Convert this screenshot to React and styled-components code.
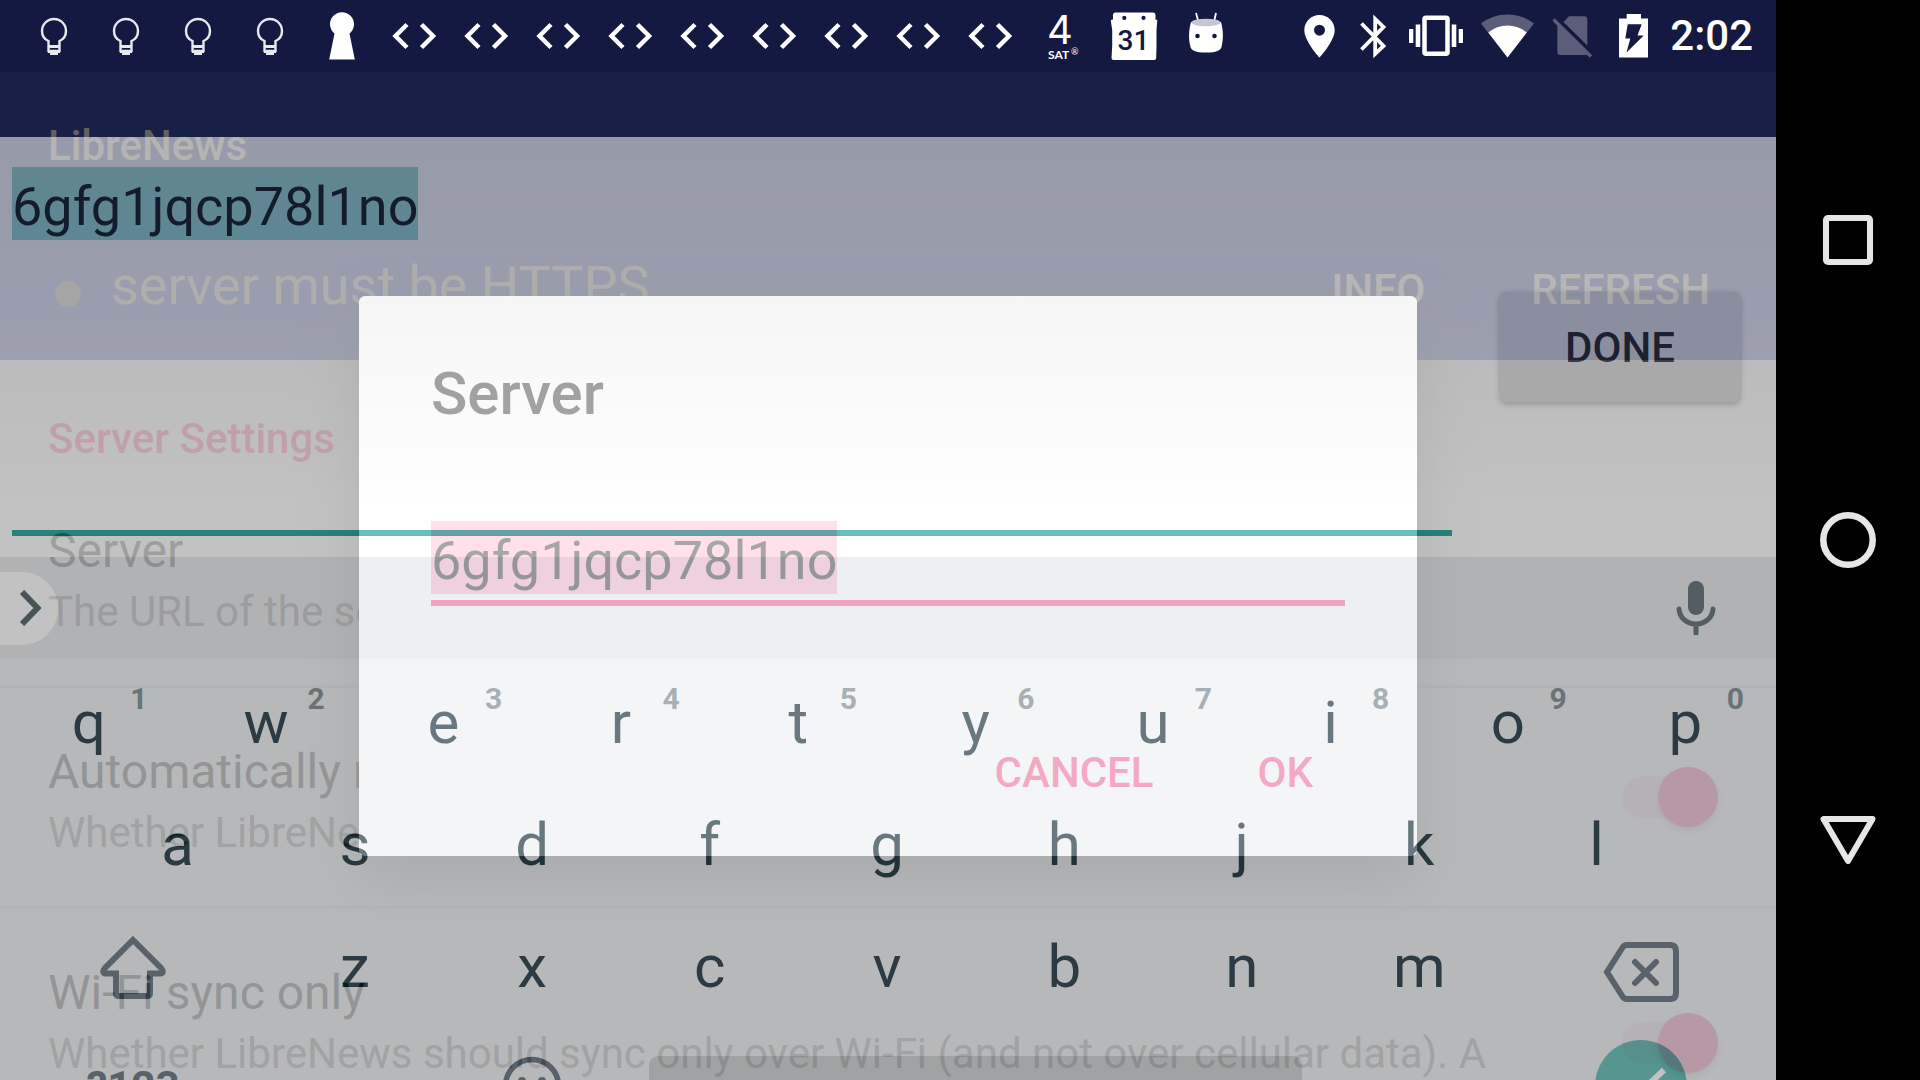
import React from "react";
import styled, { createGlobalStyle } from "styled-components";

const GlobalStyle = createGlobalStyle`
  * { box-sizing: border-box; }
  body { margin: 0; overflow: hidden; background: #000; font-family: Roboto, "Noto Sans", sans-serif; }
  button, input { font-family: inherit; margin: 0; }
  button { border: 0; padding: 0; background: none; cursor: pointer; }
  h1, h2, p { margin: 0; }
`;

const Device = styled.div`
  display: flex;
  height: 100vh;
`;

const Screen = styled.main`
  flex: 1;
  min-width: 0;
  display: flex;
  flex-direction: column;
`;

/* ---------- status bar ---------- */

const StatusBar = styled.header`
  height: 72px;
  flex: none;
  display: flex;
  justify-content: space-between;
  background: #131940;
  padding: 0 23px 0 18px;
`;

const StatusGroup = styled.div`
  display: flex;
  align-items: center;
  gap: ${(p) => p.$gap || 0}px;
`;

const Clock = styled.time`
  color: #fff;
  font-size: 42px;
  font-weight: 500;
  line-height: 72px;
`;

/* ---------- stacked windows ---------- */

const Stage = styled.div`
  flex: 1;
  min-height: 0;
  display: grid;
  grid-template: minmax(0, 1fr) / minmax(0, 1fr);
  overflow: hidden;
`;

const Layer = styled.div`
  grid-area: 1 / 1;
  min-width: 0;
  min-height: 0;
  overflow: hidden;
`;

/* ---------- settings page ---------- */

const SettingsPage = styled(Layer)`
  background: #fff;
`;

const AppBar = styled.div`
  display: flex;
  flex-direction: column;
  gap: 77px;
  padding: 47px 66px 38px 48px;
  background: #3f51b5;
  color: #f4f2ee;
`;

const AppTitle = styled.h1`
  font-size: 42px;
  line-height: 54px;
  font-weight: 500;
`;

const NoticeRow = styled.div`
  display: flex;
  align-items: flex-end;
  gap: 106px;
`;

const Notice = styled.p`
  flex: 1;
  display: flex;
  align-items: center;
  gap: 30px;
  padding-left: 7px;
  font-size: 54px;
  line-height: 72px;
  color: #bcbbba;
`;

const Dot = styled.span`
  width: 26px;
  height: 26px;
  margin-top: 16px;
  border-radius: 50%;
  background: #85837f;
`;

const BarAction = styled.button`
  color: inherit;
  font-size: 42px;
  line-height: 64px;
  font-weight: 500;
`;

const SectionTitle = styled.h2`
  padding: 52px 48px 1px;
  font-size: 42px;
  line-height: 54px;
  font-weight: 500;
  color: #ff4081;
`;

const Preference = styled.label`
  display: flex;
  align-items: center;
  padding: 0 58px 0 48px;
  min-height: ${(p) => (p.$tall ? 271 : 221)}px;
  border-bottom: 3px solid #e0e0e0;
`;

const PrefText = styled.div`
  flex: 1;
  display: flex;
  flex-direction: column;
  min-height: ${(p) => (p.$tall ? 172 : 122)}px;
`;

const PrefTitle = styled.span`
  font-size: 48px;
  line-height: 72px;
  color: #212121;
`;

const PrefSummary = styled.span`
  font-size: 42px;
  line-height: 50px;
  color: #757575;
`;

const Switch = styled.input`
  appearance: none;
  margin: 0;
  width: 96px;
  height: 60px;
  display: grid;
  align-items: center;
  &::before, &::after { content: ""; grid-area: 1 / 1; }
  &::before {
    width: 88px;
    height: 42px;
    border-radius: 21px;
    background: #ffd5e2;
  }
  &::after {
    width: 60px;
    height: 60px;
    border-radius: 50%;
    justify-self: end;
    background: #ff4081;
    box-shadow: 0 4px 6px rgba(0, 0, 0, 0.25);
  }
`;

/* ---------- dialog ---------- */

const Scrim = styled(Layer)`
  display: flex;
  align-items: center;
  justify-content: center;
  background: rgba(0, 0, 0, 0.6);
`;

const DialogBox = styled.section`
  width: 100%;
  max-width: 1058px;
  padding: 62px 72px 56px;
  border-radius: 6px;
  background: #fff;
  box-shadow: 0 24px 60px rgba(0, 0, 0, 0.35);
`;

const DialogTitle = styled.h2`
  font-size: 60px;
  line-height: 72px;
  font-weight: 500;
  color: #212121;
`;

const DialogField = styled.div`
  margin-top: 91px;
  padding-bottom: 6px;
  display: flex;
  border-bottom: 6px solid #ff4081;
`;

const SelectedInput = styled.input`
  field-sizing: content;
  border: 0;
  outline: 0;
  padding: 6px 0 0;
  height: 73px;
  font-size: 54px;
  line-height: 67px;
  color: ${(p) => p.$color};
  background: ${(p) => p.$mark};
`;

const DialogActions = styled.div`
  display: flex;
  justify-content: flex-end;
  gap: 104px;
  margin-top: 140px;
  padding-right: 32px;
`;

const DialogAction = styled.button`
  font-size: 42px;
  line-height: 54px;
  font-weight: 500;
  color: #ff4081;
`;

/* ---------- full-screen editor and keyboard ---------- */

const InputMethod = styled(Layer)`
  padding-top: 65px;
  opacity: 0.6;
`;

const Editor = styled.div`
  height: 420px;
  display: flex;
  align-items: center;
  gap: 48px;
  padding: 0 36px 0 12px;
  background: linear-gradient(#ececea, #f1f1f1 40%, #fff 88%);
`;

const EditorField = styled.div`
  flex: 1;
  align-self: stretch;
  display: flex;
  align-items: flex-start;
  margin-bottom: 21px;
  padding-top: 30px;
  border-bottom: 6px solid #009688;
`;

const DoneButton = styled.button`
  width: 240px;
  height: 110px;
  border-radius: 6px;
  background: #d6d7d7;
  color: rgba(0, 0, 0, 0.87);
  font-size: 42px;
  font-weight: 500;
  box-shadow: 0 2px 6px rgba(0, 0, 0, 0.3);
`;

const Keyboard = styled.div`
  background: #eceff1;
  color: #06202c;
`;

const Strip = styled.div`
  height: 102px;
  margin-bottom: 2px;
  display: flex;
  align-items: center;
  justify-content: space-between;
  padding-right: 60px;
  background: #e3e5e8;
`;

const Expand = styled.button`
  width: 58px;
  height: 73px;
  padding-left: 4px;
  border-radius: 0 36px 36px 0;
  background: #fff;
  display: grid;
  place-items: center;
`;

const KeyRow = styled.div`
  display: flex;
  height: 122px;
  margin-right: 2px;
  padding: 0 ${(p) => p.$inset || "0"};
`;

const BottomRow = styled.div`
  display: grid;
  grid-template-columns: 1.5fr 1fr 1fr 4fr 1fr 1.5fr;
  align-items: center;
  height: 118px;
  margin-right: 2px;
`;

const Key = styled.button`
  flex: ${(p) => p.$span || 1} 1 0;
  min-width: 0;
  position: relative;
  display: flex;
  align-items: center;
  justify-content: center;
  grid-column: ${(p) => p.$column || "auto"};
  color: ${(p) => (p.$muted ? "#51606d" : "inherit")};
  font-size: ${(p) => (p.$muted ? 42 : 60)}px;
  font-weight: ${(p) => (p.$muted ? 700 : 400)};
`;

const Hint = styled.span`
  position: absolute;
  top: 20px;
  right: 30px;
  font-size: 30px;
  line-height: 35px;
  font-weight: 700;
  color: #6c7c84;
`;

const SpaceKey = styled.button`
  grid-column: 4;
  height: 60px;
  margin: 0 28px;
  border-radius: 9px;
  background: #c7cdcd;
`;

const EnterKey = styled.button`
  grid-column: 6;
  justify-self: center;
  width: 92px;
  height: 92px;
  border-radius: 50%;
  background: #4db6ac;
  display: grid;
  place-items: center;
`;

/* ---------- navigation bar ---------- */

const NavBar = styled.nav`
  width: 144px;
  flex: none;
  display: flex;
  flex-direction: column;
  justify-content: center;
  background: #000;
`;

const NavButton = styled.button`
  height: 300px;
  display: grid;
  place-items: center;
`;

/* ---------- icons ---------- */

const Glyph = ({ w = 72, h = 72, children }) => (
  <svg width={w} height={h} viewBox={`0 0 ${w} ${h}`} fill="none" aria-hidden="true">
    {children}
  </svg>
);

const Bulb = () => (
  <Glyph>
    <path d="M30.5 51V41C27 39.5 24 36 24 31a12 12 0 0 1 24 0c0 5-3 8.500-6.500 10V51Z" stroke="#e6eaec" strokeWidth="2.400" />
    <path d="M30 46.500h12M30 51.500h12" stroke="#e6eaec" strokeWidth="2.800" />
    <path d="M32 51h8v4h-8z" fill="#e6eaec" />
  </Glyph>
);

const Keyhole = () => (
  <Glyph>
    <path d="M28.500 33.500a12 12 0 1 1 15 0L48.800 59.500H23.200Z" fill="#fff" />
  </Glyph>
);

const Code = () => (
  <Glyph>
    <path d="M29 24.500 17.500 36 29 47.500M43.500 24.500 55 36 43.500 47.500" stroke="#fff" strokeWidth="4.500" />
  </Glyph>
);

const SatDay = () => (
  <Glyph>
    <text x="21" y="44" fontFamily="Inter, sans-serif" fontSize="40" fill="#fff">4</text>
    <text x="22" y="59" fontFamily="Lato, sans-serif" fontSize="12" fontWeight="700" fill="#fff">SAT</text>
    <text x="45" y="55" fontFamily="Lato, sans-serif" fontSize="9" fill="#fff">®</text>
  </Glyph>
);

const Calendar = () => (
  <Glyph>
    <path
      fillRule="evenodd"
      fill="#fff"
      d="M17.500 12.500h38q2 0 2 2.500v4.500l1.800.5-.8 10v16l-.3 12q0 2-2 2H15.500q-2 0-2-2l.7-12V30l-1.500-10 2.300-.5V15q0-2.500 2.500-2.500ZM26.300 15.800a2.100 2.100 0 1 0 0 4.200 2.100 2.100 0 0 0 0-4.200Zm19.200 0a2.100 2.100 0 1 0 0 4.200 2.100 2.100 0 0 0 0-4.200Z"
    />
    <text x="35.500" y="50" textAnchor="middle" fontSize="28" fontWeight="500" fill="#131940">31</text>
  </Glyph>
);

const Marshmallow = () => (
  <Glyph>
    <path d="m26 13 2.500 9M46 13l-2 9" stroke="#fff" strokeWidth="1.800" />
    <path d="M21 22c-2.500 9-2.500 17-.5 25 .8 3.500 5 5.500 15.500 5.500S50.700 50.500 51.500 47c2-8 2-16-.5-25Z" fill="#fff" />
    <ellipse cx="36" cy="22.500" rx="14.500" ry="3.800" fill="#c5c6d0" />
    <circle cx="27.500" cy="36" r="2.300" fill="#131940" />
    <circle cx="44.500" cy="36" r="2.300" fill="#131940" />
  </Glyph>
);

const Pin = () => (
  <Glyph w={37}>
    <path
      fillRule="evenodd"
      fill="#fff"
      d="M18.500 15c8.500 0 15.200 6.700 15.200 15.200C33.700 41 18.500 57.500 18.500 57.500S3.300 41 3.300 30.200C3.300 21.700 10 15 18.500 15Zm0 9.700a5.500 5.500 0 1 0 0 11 5.500 5.500 0 0 0 0-11Z"
    />
  </Glyph>
);

const Bluetooth = () => (
  <Glyph w={35}>
    <path d="M5.500 23.500 27.500 46l-8.300 7.800V19L27.500 27 5.500 49.500" stroke="#fff" strokeWidth="3.800" />
  </Glyph>
);

const Vibrate = () => (
  <Glyph w={54}>
    <rect x="15.500" y="17.800" width="23" height="36" rx="1.500" stroke="#fff" strokeWidth="4.500" />
    <path d="M0 29h4.300v14H0zM6.700 24.500h4.600v22.500H6.700zM42.700 24.500h4.600v22.500h-4.600zM49.700 29H54v14h-4.300z" fill="#fff" />
  </Glyph>
);

const Wifi = () => (
  <Glyph w={53}>
    <path d="M0 23.500a43.500 43.500 0 0 1 53 0L26.500 57.500Z" fill="#5c5e79" />
    <path d="M7.300 32.500a30 30 0 0 1 38.400 0L26.500 57.500Z" fill="#fff" />
  </Glyph>
);

const NoSim = () => (
  <Glyph w={44}>
    <path d="M17 16.200h15q3.300 0 3.300 3.300V45.500L11.500 22Z" fill="#5c5e79" />
    <path d="M5.300 22.500 35 54.500q-1 .5-2 .5H8.600q-3.300 0-3.300-3.300Z" fill="#5c5e79" />
    <path d="m1.500 19.500 37.500 37" stroke="#5c5e79" strokeWidth="3.200" />
  </Glyph>
);

const Battery = () => (
  <Glyph w={38}>
    <path
      fillRule="evenodd"
      fill="#fff"
      d="M12.700 14H27v4.500h7v39H5v-39h7.700ZM13.700 24.300 11.300 38.500h5L12.500 52.500 29.700 35.500H23.500L27.700 24.300Z"
    />
  </Glyph>
);

const Chevron = () => (
  <Glyph w={24} h={36}>
    <path d="M3 2 18.500 18 3 34" stroke="#37474f" strokeWidth="6" />
  </Glyph>
);

const Mic = () => (
  <Glyph w={40} h={54}>
    <rect x="12" y="0" width="16" height="34" rx="8" fill="#455a64" />
    <path d="M3 28c.5 8.500 7.500 15 17 15s16.500-6.500 17-15M20 43v9" stroke="#455a64" strokeWidth="5" strokeLinecap="round" />
  </Glyph>
);

const Shift = () => (
  <Glyph w={68} h={68}>
    <path
      d="M34 8 62 36q4 5-1 5.500H51V61q0 3-3 3H20q-3 0-3-3V41.500H7Q2 41 6 36Z"
      stroke="#51606d"
      strokeWidth="6"
    />
  </Glyph>
);

const Backspace = () => (
  <Glyph w={76} h={72}>
    <path d="M24 15h43q6 0 6 6v42q0 6-6 6H24q-3 0-4.500-2.500L4 42 19.500 17.500Q21 15 24 15Z" stroke="#51606d" strokeWidth="6" />
    <path d="m32 32 21 21M53 32 32 53" stroke="#51606d" strokeWidth="6" strokeLinecap="round" />
  </Glyph>
);

const Smiley = () => (
  <Glyph w={60} h={60}>
    <circle cx="30" cy="30" r="26.500" stroke="#51606d" strokeWidth="5.500" />
    <circle cx="20" cy="25" r="4" fill="#51606d" />
    <circle cx="40" cy="25" r="4" fill="#51606d" />
    <path d="M17 36q13 14 26 0" stroke="#51606d" strokeWidth="5" />
  </Glyph>
);

const Check = () => (
  <Glyph w={52} h={40}>
    <path d="m3 20 14 14L49 4" stroke="#fff" strokeWidth="6" />
  </Glyph>
);

const Recents = () => (
  <Glyph w={50} h={50}>
    <rect x="3" y="3" width="44" height="44" rx="2" stroke="#e6e6e6" strokeWidth="6" />
  </Glyph>
);

const Home = () => (
  <Glyph w={56} h={56}>
    <circle cx="28" cy="28" r="24.700" stroke="#e6e6e6" strokeWidth="6.500" />
  </Glyph>
);

const Back = () => (
  <Glyph w={56} h={48}>
    <path d="M3.500 3h49L28 45Z" stroke="#e6e6e6" strokeWidth="6" strokeLinejoin="round" />
  </Glyph>
);

/* ---------- data ---------- */

const NOTIFICATIONS = [
  ...Array(4).fill(Bulb),
  Keyhole,
  ...Array(9).fill(Code),
  SatDay,
  Calendar,
  Marshmallow,
];

const SERVER = "6gfg1jqcp78l1no";

export default function App() {
  return (
    <Device>
      <GlobalStyle />
      <Screen>
        <StatusBar>
          <StatusGroup>
            {NOTIFICATIONS.map((Icon, i) => (
              <Icon key={i} />
            ))}
          </StatusGroup>
          <StatusGroup $gap={18}>
            <Pin />
            <Bluetooth />
            <Vibrate />
            <Wifi />
            <NoSim />
            <Battery />
            <Clock>2:02</Clock>
          </StatusGroup>
        </StatusBar>

        <Stage>
          <SettingsPage>
            <AppBar>
              <AppTitle>LibreNews</AppTitle>
              <NoticeRow>
                <Notice>
                  <Dot />
                  server must be HTTPS
                </Notice>
                <BarAction>INFO</BarAction>
                <BarAction>REFRESH</BarAction>
              </NoticeRow>
            </AppBar>
            <SectionTitle>Server Settings</SectionTitle>
            <Preference as="div">
              <PrefText>
                <PrefTitle>Server</PrefTitle>
                <PrefSummary>The URL of the server</PrefSummary>
              </PrefText>
            </Preference>
            <Preference>
              <PrefText>
                <PrefTitle>Automatically refresh</PrefTitle>
                <PrefSummary>Whether LibreNews</PrefSummary>
              </PrefText>
              <Switch type="checkbox" defaultChecked />
            </Preference>
            <Preference $tall>
              <PrefText $tall>
                <PrefTitle>Wi-Fi sync only</PrefTitle>
                <PrefSummary>
                  Whether LibreNews should sync only over Wi-Fi (and not over cellular data). A
                </PrefSummary>
              </PrefText>
              <Switch type="checkbox" defaultChecked />
            </Preference>
          </SettingsPage>

          <Scrim>
            <DialogBox role="dialog" aria-labelledby="dialog-title">
              <DialogTitle id="dialog-title">Server</DialogTitle>
              <DialogField>
                <SelectedInput
                  aria-labelledby="dialog-title"
                  defaultValue={SERVER}
                  $color="#212121"
                  $mark="rgba(255, 64, 129, 0.4)"
                />
              </DialogField>
              <DialogActions>
                <DialogAction>CANCEL</DialogAction>
                <DialogAction>OK</DialogAction>
              </DialogActions>
            </DialogBox>
          </Scrim>

          <InputMethod>
            <Editor>
              <EditorField>
                <SelectedInput
                  aria-label="Server"
                  defaultValue={SERVER}
                  $color="rgba(0, 0, 0, 0.87)"
                  $mark="rgba(0, 150, 136, 0.4)"
                />
              </EditorField>
              <DoneButton>DONE</DoneButton>
            </Editor>
            <Keyboard>
              <Strip>
                <Expand aria-label="Expand">
                  <Chevron />
                </Expand>
                <Key $span="none" aria-label="Voice input">
                  <Mic />
                </Key>
              </Strip>
              <KeyRow>
                {"qwertyuiop".split("").map((letter, i) => (
                  <Key key={letter}>
                    {letter}
                    <Hint>{(i + 1) % 10}</Hint>
                  </Key>
                ))}
              </KeyRow>
              <KeyRow $inset="5%">
                {"asdfghjkl".split("").map((letter) => (
                  <Key key={letter}>{letter}</Key>
                ))}
              </KeyRow>
              <KeyRow>
                <Key $span={1.5} aria-label="Shift">
                  <Shift />
                </Key>
                {"zxcvbnm".split("").map((letter) => (
                  <Key key={letter}>{letter}</Key>
                ))}
                <Key $span={1.5} aria-label="Delete">
                  <Backspace />
                </Key>
              </KeyRow>
              <BottomRow>
                <Key $muted $column="1">?123</Key>
                <Key $column="3" aria-label="Emoji">
                  <Smiley />
                </Key>
                <SpaceKey aria-label="Space" />
                <EnterKey aria-label="Enter">
                  <Check />
                </EnterKey>
              </BottomRow>
            </Keyboard>
          </InputMethod>
        </Stage>
      </Screen>

      <NavBar>
        <NavButton aria-label="Recent apps">
          <Recents />
        </NavButton>
        <NavButton aria-label="Home">
          <Home />
        </NavButton>
        <NavButton aria-label="Back">
          <Back />
        </NavButton>
      </NavBar>
    </Device>
  );
}
